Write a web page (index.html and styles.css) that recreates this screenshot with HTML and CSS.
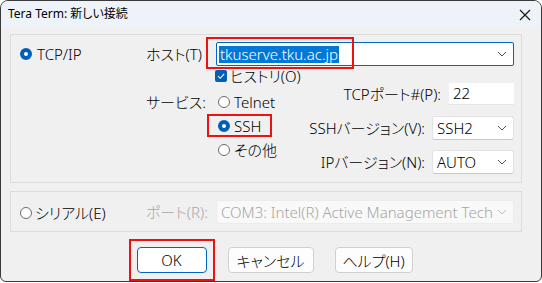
FILE: index.html
```html
<!DOCTYPE html>
<html lang="ja">
<head>
    <meta charset="UTF-8">
    <title>Tera Term: 新しい接続</title>
    <link rel="stylesheet" href="styles.css">
</head>
<body>
    <div class="window">
        <!-- Title bar -->
        <div class="titlebar">
            <span class="title">Tera Term: 新しい接続</span>
            <svg class="close" width="12" height="12" viewBox="0 0 12 12">
                <path d="M1 1 L11 11 M11 1 L1 11" stroke="#1a1a1a" stroke-width="1.2" fill="none"/>
            </svg>
        </div>

        <div class="dialog">
            <!-- TCP/IP group -->
            <div class="group tcp">
                <div class="proto">
                    <span class="radio on"></span>
                    <span>TCP/IP</span>
                </div>
                <div class="tcp-main">
                    <div class="host-row">
                        <span class="label">ホスト(T)</span>
                        <div class="combo focus">
                            <span class="selected">tkuserve.tku.ac.jp</span>
                            <svg class="chev" width="10" height="6" viewBox="0 0 10 6"><path d="M1 1 L5 5 L9 1" stroke="#555" fill="none"/></svg>
                        </div>
                        <span class="mark host-mark"></span>
                    </div>
                    <div class="lower">
                        <div class="lower-left">
                            <div class="history">
                                <span class="check">
                                    <svg width="12" height="12" viewBox="0 0 12 12"><path d="M3 6.2 L5.2 8.3 L9.2 3.8" stroke="#fff" stroke-width="1.1" fill="none"/></svg>
                                </span>
                                <span>ヒストリ(O)</span>
                            </div>
                            <div class="service">
                                <span class="label">サービス:</span>
                                <div class="options">
                                    <div class="option"><span class="radio"></span><span>Telnet</span></div>
                                    <div class="option marked"><span class="radio on"></span><span>SSH</span></div>
                                    <div class="option"><span class="radio"></span><span>その他</span></div>
                                </div>
                            </div>
                        </div>
                        <div class="lower-right">
                            <div class="field">
                                <span>TCPポート#(P):</span>
                                <div class="input port">22</div>
                            </div>
                            <div class="field">
                                <span>SSHバージョン(V):</span>
                                <div class="combo small">
                                    <span>SSH2</span>
                                    <svg class="chev" width="10" height="6" viewBox="0 0 10 6"><path d="M1 1 L5 5 L9 1" stroke="#555" fill="none"/></svg>
                                </div>
                            </div>
                            <div class="field">
                                <span>IPバージョン(N):</span>
                                <div class="combo small">
                                    <span>AUTO</span>
                                    <svg class="chev" width="10" height="6" viewBox="0 0 10 6"><path d="M1 1 L5 5 L9 1" stroke="#555" fill="none"/></svg>
                                </div>
                            </div>
                        </div>
                    </div>
                </div>
            </div>

            <!-- Serial group -->
            <div class="group serial">
                <div class="proto">
                    <span class="radio"></span>
                    <span>シリアル(E)</span>
                </div>
                <div class="serial-main">
                    <span class="label disabled">ポート(R):</span>
                    <div class="combo disabled">
                        <span>COM3: Intel(R) Active Management Tech</span>
                        <svg class="chev" width="10" height="6" viewBox="0 0 10 6"><path d="M1 1 L5 5 L9 1" stroke="#bbb" fill="none"/></svg>
                    </div>
                </div>
            </div>

            <!-- Buttons -->
            <div class="buttons">
                <button class="btn default marked-btn">OK</button>
                <button class="btn cancel">キャンセル</button>
                <button class="btn help">ヘルプ(H)</button>
            </div>
        </div>
    </div>
</body>
</html>
```

FILE: styles.css
```css
/* Whole page */
body {
    margin: 0;
    background: #ffffff;
    font-family: "Noto Sans", "Noto Sans CJK JP", sans-serif;
    font-size: 15px;
    font-weight: 300;
    line-height: 20px;
    font-feature-settings: "palt";
    color: #000;
    white-space: nowrap;
}

/* Window frame */
.window {
    width: 540px;
    height: 280px;
    border: 1px solid #3a3a3a;
    border-radius: 8px 8px 6px 6px;
    background: #f0f0f0;
    overflow: hidden;
}

.titlebar {
    height: 26px;
    background: #eef3f9;
    display: flex;
    align-items: center;
    justify-content: space-between;
    padding: 0 10px 0 7px;
}

.title {
    font-size: 12px;
    font-weight: 400;
}

.close {
    margin-top: 1px;
}

.dialog {
    padding: 7px 19px 0 9px;
}

/* Group boxes */
.group {
    border: 1px solid #dcdcdc;
    display: flex;
}

.tcp {
    height: 140px;
    padding: 7px 7px 0 0;
}

.proto {
    width: 126px;
    flex-shrink: 0;
    padding-left: 9px;
    height: 24px;
    display: flex;
    align-items: center;
    gap: 5px;
}

.tcp-main {
    flex: 1;
    min-width: 0;
}

.label {
    width: 70px;
    flex-shrink: 0;
}

.disabled {
    color: #a6a6a6;
}

/* Radios and checkbox */
.radio {
    width: 10px;
    height: 10px;
    border: 1px solid #6b6b6b;
    border-radius: 50%;
    background: #fff;
    flex-shrink: 0;
}

.radio.on {
    width: 4px;
    height: 4px;
    border: 4px solid #005fb8;
    background: #fff;
}

.check {
    width: 12px;
    height: 12px;
    background: #005fb8;
    border-radius: 2px;
    display: flex;
}

/* Host row */
.host-row {
    position: relative;
    height: 24px;
    display: flex;
    align-items: center;
}

.combo {
    flex: 1;
    height: 22px;
    background: #fff;
    border: 1px solid #e2e2e2;
    border-bottom-color: #c8c8c8;
    border-radius: 3px;
    display: flex;
    align-items: center;
    justify-content: space-between;
    padding: 0 6px 0 2px;
    overflow: hidden;
}

.combo.focus {
    border: 1px solid #0067c0;
    border-radius: 2px;
}

.selected {
    background: #0078d7;
    color: #fff;
    line-height: 17px;
    padding: 0 1px;
}

.mark {
    position: absolute;
    border: 2px solid #ee1111;
}

.host-mark {
    left: 60px;
    top: -5px;
    width: 144px;
    height: 28px;
}

/* Lower area of TCP/IP group */
.lower {
    display: flex;
}

.lower-left {
    width: 161px;
    flex-shrink: 0;
}

.history {
    margin-left: 69px;
    height: 20px;
    display: flex;
    align-items: center;
    gap: 3px;
}

.service {
    display: flex;
    margin-top: 4px;
}

.service .label {
    height: 24px;
    line-height: 24px;
}

.options {
    padding-left: 2px;
}

.option {
    position: relative;
    height: 24px;
    display: flex;
    align-items: center;
    gap: 4px;
}

.marked::after {
    content: "";
    position: absolute;
    left: -11px;
    top: 0;
    width: 61px;
    height: 19px;
    border: 2px solid #ee1111;
}

.lower-right {
    flex: 1;
    margin-top: 17px;
    display: flex;
    flex-direction: column;
    gap: 12px;
}

.field {
    height: 22px;
    display: flex;
    align-items: center;
    justify-content: flex-end;
    gap: 7px;
}

.input {
    height: 22px;
    background: #fff;
    border-bottom: 1px solid #e6e6e6;
    box-sizing: border-box;
    line-height: 21px;
}

.port {
    width: 65px;
    padding-left: 4px;
    margin-left: 1px;
}

.combo.small {
    flex: none;
    width: 70px;
    padding-left: 4px;
}

/* Serial group */
.serial {
    margin-top: 8px;
    height: 39px;
    align-items: center;
    padding-right: 7px;
}

.serial .proto {
    margin-top: 2px;
    gap: 3px;
}

.serial-main {
    flex: 1;
    display: flex;
    align-items: center;
    min-width: 0;
}

.combo.disabled {
    background: #f9f9f9;
    border-color: #ececec;
    padding-left: 4px;
}

/* Buttons */
.buttons {
    display: flex;
    justify-content: center;
    gap: 21px;
    margin-top: 15px;
    padding-left: 17px;
}

.btn {
    height: 26px;
    font-family: inherit;
    font-size: 15px;
    font-weight: 300;
    font-feature-settings: "palt";
    background: #fdfdfd;
    border: 1px solid #d0d0d0;
    border-radius: 4px;
    padding: 0;
    color: #000;
}

.default {
    width: 70px;
    background: #fff;
    border-color: #0067c0;
    position: relative;
}

.marked-btn::after {
    content: "";
    position: absolute;
    left: -9px;
    top: -9px;
    width: 82px;
    height: 38px;
    border: 2px solid #ee1111;
}

.cancel {
    width: 86px;
}

.help {
    width: 78px;
}
```
